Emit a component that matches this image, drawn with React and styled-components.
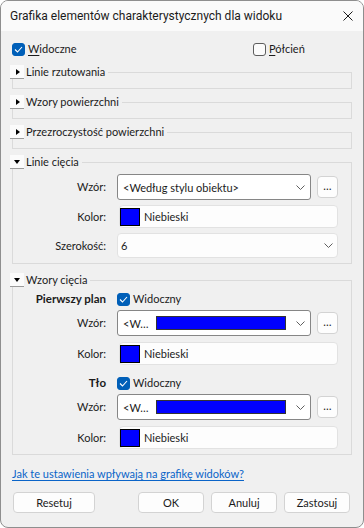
import React from "react"
import styled, { createGlobalStyle } from "styled-components"

const GlobalStyle = createGlobalStyle`
  html, body {
    margin: 0;
    padding: 0;
    background: #ffffff;
  }
  body {
    font-family: Lato, Roboto, "Noto Sans", sans-serif;
    font-size: 11px;
    color: #1b1b1b;
  }
  * {
    box-sizing: border-box;
  }
`

function Chevron() {
  return (
    <svg width="9" height="5" viewBox="0 0 9 5">
      <polyline points="0.5,0.5 4.5,4.5 8.5,0.5" fill="none" stroke="#5f5f5f" strokeWidth="1" />
    </svg>
  )
}

function Check({ checked, children }) {
  return (
    <CheckLabel>
      <Box $checked={checked}>
        {checked && (
          <svg width="9" height="7" viewBox="0 0 9 7">
            <polyline points="1,3.5 3.5,6 8,1" fill="none" stroke="#ffffff" strokeWidth="1.1" />
          </svg>
        )}
      </Box>
      <span>{children}</span>
    </CheckLabel>
  )
}

function Group({ title, open, top, children }) {
  return (
    <Fieldset $top={top} $open={open}>
      <Legend>
        <Expander>
          <Arrow $open={open} />
        </Expander>
        {title}
      </Legend>
      {children}
    </Fieldset>
  )
}

function ColorField() {
  return (
    <ColorBox>
      <Swatch />
      Niebieski
    </ColorBox>
  )
}

function PatternCombo({ short }) {
  return (
    <ComboRow>
      <Combo $strong>
        <ComboText>{short ? "<W…" : "<Według stylu obiektu>"}</ComboText>
        {short && <Bar />}
        <Chevron />
      </Combo>
      <MoreButton>…</MoreButton>
    </ComboRow>
  )
}

function App() {
  return (
    <>
      <GlobalStyle />
      <Window>
        <TitleBar>
          <Title>Grafika elementów charakterystycznych dla widoku</Title>
          <svg width="10" height="10" viewBox="0 0 10 10">
            <path d="M0.5 0.5 L9.5 9.5 M9.5 0.5 L0.5 9.5" stroke="#1b1b1b" strokeWidth="1" />
          </svg>
        </TitleBar>
        <Body>
          <TopRow>
            <Check checked>
              <u>W</u>idoczne
            </Check>
            <Check>
              <u>P</u>ółcień
            </Check>
          </TopRow>

          <Groups>
            <Group title="Linie rzutowania" top={9} />
            <Group title="Wzory powierzchni" top={6} />
            <Group title="Przezroczystość powierzchni" top={6} />
            <Group title="Linie cięcia" open top={6}>
              <Row $mt={5}>
                <Label>Wzór:</Label>
                <PatternCombo />
              </Row>
              <Row $mt={5}>
                <Label>Kolor:</Label>
                <ColorField />
              </Row>
              <Row $mt={5}>
                <Label>Szerokość:</Label>
                <Select>
                  <span>6</span>
                  <Chevron />
                </Select>
              </Row>
            </Group>
            <Group title="Wzory cięcia" open top={9}>
              <Row $mt={5}>
                <Label $bold>Pierwszy plan</Label>
                <Check checked>Widoczny</Check>
              </Row>
              <Row $mt={4}>
                <Label>Wzór:</Label>
                <PatternCombo short />
              </Row>
              <Row $mt={6}>
                <Label>Kolor:</Label>
                <ColorField />
              </Row>
              <Row $mt={11}>
                <Label $bold>Tło</Label>
                <Check checked>Widoczny</Check>
              </Row>
              <Row $mt={4}>
                <Label>Wzór:</Label>
                <PatternCombo short />
              </Row>
              <Row $mt={6}>
                <Label>Kolor:</Label>
                <ColorField />
              </Row>
            </Group>
          </Groups>

          <HelpLink href="#">Jak te ustawienia wpływają na grafikę widoków?</HelpLink>

          <Buttons>
            <Button $wide>Resetuj</Button>
            <Button>OK</Button>
            <Button>Anuluj</Button>
            <Button>Zastosuj</Button>
          </Buttons>
        </Body>
      </Window>
    </>
  )
}

const Window = styled.div`
  width: 364px;
  height: 528px;
  border: 1px solid #8e8e8e;
  border-radius: 8px;
  overflow: hidden;
  background: #f0f0f0;
  display: flex;
  flex-direction: column;
`
const TitleBar = styled.div`
  height: 30px;
  flex: none;
  background: #fafafa;
  display: flex;
  align-items: center;
  justify-content: space-between;
  padding: 0 10px 0 9px;
`
const Title = styled.div`
  font-family: Roboto, "Noto Sans", sans-serif;
  font-size: 12px;
  line-height: 16px;
  color: #1b1b1b;
`
const Body = styled.div`
  padding: 11px 11px 0 11px;
  display: flex;
  flex-direction: column;
`
const TopRow = styled.div`
  display: grid;
  grid-template-columns: 241px 1fr;
  height: 14px;
  align-items: center;
`
const CheckLabel = styled.label`
  display: inline-flex;
  align-items: center;
  gap: 3px;
  line-height: 14px;
  white-space: nowrap;
  u {
    text-underline-offset: 2px;
  }
`
const Box = styled.span`
  width: 13px;
  height: 13px;
  flex: none;
  border-radius: 3px;
  display: inline-flex;
  align-items: center;
  justify-content: center;
  background: ${p => (p.$checked ? "#005fb8" : "#fbfbfb")};
  border: 1px solid ${p => (p.$checked ? "#005fb8" : "#5d5d5d")};
`
const Groups = styled.div`
  display: flex;
  flex-direction: column;
`
const Fieldset = styled.fieldset`
  margin: ${p => p.$top}px 0 0 0;
  padding: 0 13px ${p => (p.$open ? 5 : 9)}px 0;
  border: 1px solid #dadada;
  min-width: 0;
`
const Legend = styled.legend`
  display: flex;
  align-items: center;
  gap: 2px;
  height: 14px;
  line-height: 14px;
  margin-left: -3px;
  padding: 0 3px 0 0;
`
const Expander = styled.span`
  width: 14px;
  height: 14px;
  background: #fbfbfb;
  border-bottom: 1px solid #9a9a9a;
  display: inline-flex;
  align-items: center;
  justify-content: center;
`
const Arrow = styled.span`
  width: 0;
  height: 0;
  ${p =>
    p.$open
      ? `border-left: 3.5px solid transparent;
         border-right: 3.5px solid transparent;
         border-top: 4px solid #000;
         margin-top: 1px;`
      : `border-top: 3.5px solid transparent;
         border-bottom: 3.5px solid transparent;
         border-left: 4px solid #000;
         margin-left: 1px;`}
`
const Row = styled.div`
  display: grid;
  grid-template-columns: 93px 1fr;
  column-gap: 11px;
  align-items: center;
  margin-top: ${p => p.$mt}px;
`
const Label = styled.div`
  text-align: right;
  line-height: 14px;
  font-weight: ${p => (p.$bold ? 700 : 400)};
  font-size: ${p => (p.$bold ? 11.5 : 11)}px;
  white-space: nowrap;
`
const ComboRow = styled.div`
  display: flex;
  align-items: center;
  gap: 6px;
`
const Combo = styled.div`
  flex: 1;
  height: 26px;
  background: #ffffff;
  border: 1px solid ${p => (p.$strong ? "#868686" : "#e2e2e2")};
  border-radius: 3px;
  display: flex;
  align-items: center;
  padding: 0 5px 0 5px;
  gap: 6px;
`
const ComboText = styled.span`
  flex: none;
  white-space: nowrap;
  margin-right: auto;
`
const Bar = styled.span`
  width: 130px;
  height: 14px;
  background: #0000ff;
  border: 1px solid #333333;
  margin-right: 4px;
`
const MoreButton = styled.button`
  width: 21px;
  height: 22px;
  padding: 0 0 3px;
  border: 1px solid #d3d3d3;
  border-radius: 4px;
  background: #fdfdfd;
  font: inherit;
  font-size: 11px;
  color: #1b1b1b;
`
const ColorBox = styled.div`
  height: 23px;
  margin-left: 2px;
  border: 1px solid #e2e2e2;
  border-radius: 4px;
  background: #fdfdfd;
  display: flex;
  align-items: center;
  gap: 4px;
`
const Swatch = styled.span`
  width: 20px;
  height: 18px;
  background: #0000ff;
  border: 1px solid #000000;
`
const Select = styled.div`
  height: 25px;
  border: 1px solid #e2e2e2;
  border-radius: 4px;
  background: #fdfdfd;
  display: flex;
  align-items: center;
  justify-content: space-between;
  padding: 0 4px 0 3px;
`
const HelpLink = styled.a`
  margin-top: 12px;
  align-self: flex-start;
  line-height: 14px;
  color: #0a64c8;
  text-decoration: underline;
  text-underline-offset: 2px;
`
const Buttons = styled.div`
  margin-top: 11px;
  display: flex;
  gap: 7px;
  padding: 0 2px 0 1px;
`
const Button = styled.button`
  width: ${p => (p.$wide ? 82 : 66)}px;
  height: 21px;
  margin-right: ${p => (p.$wide ? "auto" : "0")};
  border: 1px solid #d3d3d3;
  border-radius: 4px;
  background: #fdfdfd;
  font: inherit;
  font-size: 11px;
  color: #1b1b1b;
  padding: 0;
`

export default App
